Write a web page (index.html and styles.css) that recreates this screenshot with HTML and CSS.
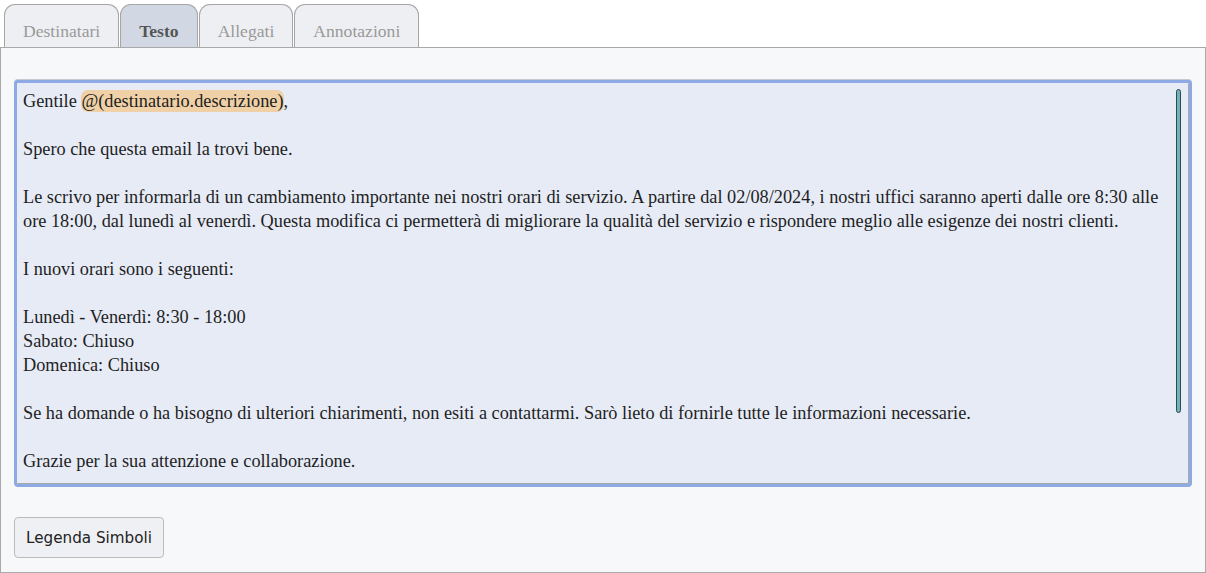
FILE: index.html
```html
<!DOCTYPE html>
<html lang="it">
<head>
    <meta charset="UTF-8">
    <meta name="viewport" content="width=device-width, initial-scale=1.0">
    <title>Testo email</title>
    <link rel="stylesheet" href="styles.css">
</head>
<body>
    <div class="tabs">
        <div class="tab">Destinatari</div>
        <div class="tab active">Testo</div>
        <div class="tab">Allegati</div>
        <div class="tab">Annotazioni</div>
    </div>

    <div class="panel">
        <div class="editor">
            <div class="editor-text">
                <p>Gentile <span class="token">@(destinatario.descrizione)</span>,</p>
                <p class="blank"></p>
                <p>Spero che questa email la trovi bene.</p>
                <p class="blank"></p>
                <p>Le scrivo per informarla di un cambiamento importante nei nostri orari di servizio. A partire dal 02/08/2024, i nostri uffici saranno aperti dalle ore 8:30 alle ore 18:00, dal lunedì al venerdì. Questa modifica ci permetterà di migliorare la qualità del servizio e rispondere meglio alle esigenze dei nostri clienti.</p>
                <p class="blank"></p>
                <p>I nuovi orari sono i seguenti:</p>
                <p class="blank"></p>
                <p>Lunedì - Venerdì: 8:30 - 18:00</p>
                <p>Sabato: Chiuso</p>
                <p>Domenica: Chiuso</p>
                <p class="blank"></p>
                <p>Se ha domande o ha bisogno di ulteriori chiarimenti, non esiti a contattarmi. Sarò lieto di fornirle tutte le informazioni necessarie.</p>
                <p class="blank"></p>
                <p>Grazie per la sua attenzione e collaborazione.</p>
            </div>
            <div class="scroll-thumb"></div>
        </div>

        <button class="legend-btn">Legenda Simboli</button>
    </div>
</body>
</html>
```

FILE: styles.css
```css
html, body {
    margin: 0;
    padding: 0;
    background-color: #ffffff;
}
body {
    font-family: "Liberation Serif", "Times New Roman", serif;
    width: 1206px;
    height: 573px;
    overflow: hidden;
}
.tabs {
    display: flex;
    gap: 1px;
    padding: 4px 0 0 4px;
    height: 47px;
    box-sizing: border-box;
}
.tab {
    padding: 15px 18px 0 18px;
    border: 1px solid #a6a6a6;
    border-bottom: none;
    border-radius: 11px 11px 0 0;
    background-color: #eeeff3;
    color: #999999;
    font-size: 17.6px;
    line-height: 23px;
}
.tab.active {
    background-color: #d1d8e3;
    color: #555555;
    font-weight: bold;
}
.panel {
    border: 1px solid #a9a9a9;
    background-color: #f7f8fa;
    height: 526px;
    box-sizing: border-box;
    padding: 32px 13px 0 13px;
}
.editor {
    position: relative;
    height: 407px;
    box-sizing: border-box;
    border: 3px solid #8eaae4;
    border-radius: 4px;
    box-shadow: inset -1px -1px 0 #a8a8a8, 0 -1px 0 #c4c8cf;
    background-color: #e6ebf6;
    overflow: hidden;
}
.editor-text {
    padding: 6px 22px 0 6px;
    font-size: 18.3px;
    line-height: 24px;
    color: #1e1e1e;
}
.editor-text p {
    margin: 0;
}
.editor-text .blank {
    height: 24px;
}
.token {
    background-color: #f0d1a7;
    border-radius: 7px;
    padding: 1px 0;
}
.scroll-thumb {
    position: absolute;
    top: 6px;
    right: 8px;
    width: 3px;
    height: 322px;
    background-color: #70b2b8;
    border: 1px solid #2f4a50;
    border-radius: 3px;
}
.legend-btn {
    display: block;
    margin-top: 30px;
    height: 41px;
    padding: 0 11px;
    border: 1px solid #bcbcbc;
    border-radius: 4px;
    background-color: #eff0f4;
    color: #222222;
    font-family: "DejaVu Sans", Verdana, sans-serif;
    font-size: 15.2px;
    cursor: pointer;
}
```
